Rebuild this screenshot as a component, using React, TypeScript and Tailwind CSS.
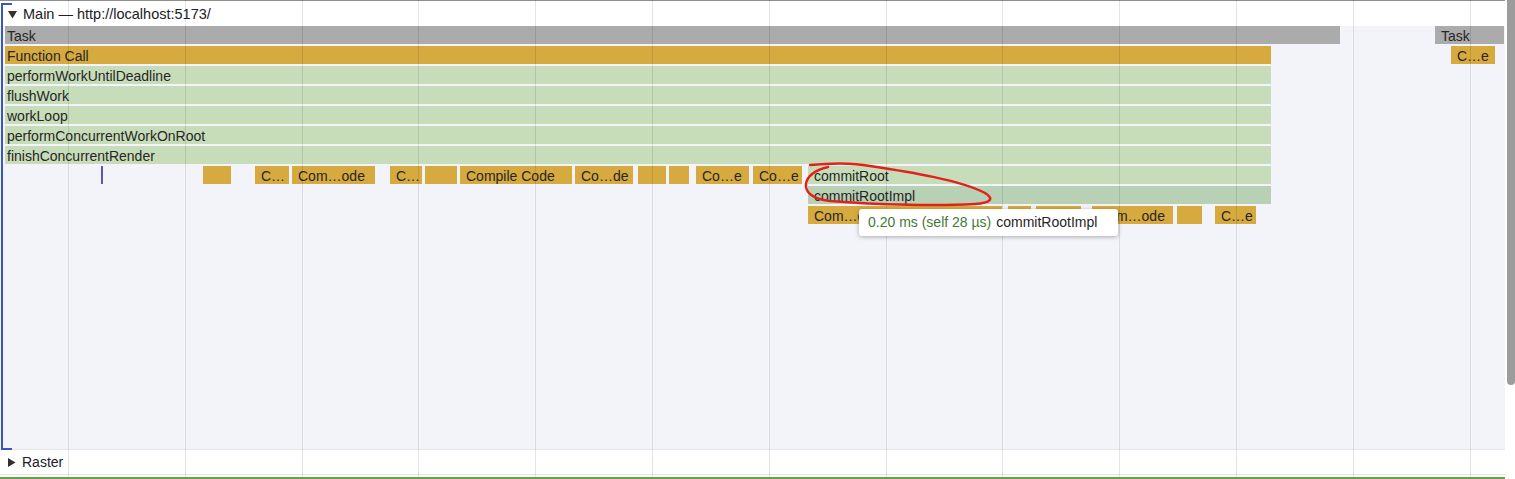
import React from "react";

type Bar = { x: number; w: number; label?: string; color: string; pad?: number };

const GRAY = "#ababab";
const GOLD = "#d7aa3f";
const GREEN = "#c7ddb9";
const SELECTED = "#b8d0b4";

const full = (label: string, color = GREEN): Bar => ({ x: 5, w: 1266, label, color, pad: 2 });

const ROWS: Bar[][] = [
  [
    { x: 5, w: 1335, label: "Task", color: GRAY, pad: 2 },
    { x: 1435, w: 69, label: "Task", color: GRAY },
  ],
  [full("Function Call", GOLD), { x: 1451, w: 44, label: "C…e", color: GOLD }],
  [full("performWorkUntilDeadline")],
  [full("flushWork")],
  [full("workLoop")],
  [full("performConcurrentWorkOnRoot")],
  [full("finishConcurrentRender")],
  [
    { x: 101, w: 2, color: "#6553b0", pad: 0 },
    { x: 203, w: 28, color: GOLD },
    { x: 255, w: 34, label: "C…", color: GOLD },
    { x: 292, w: 83, label: "Com…ode", color: GOLD },
    { x: 390, w: 32, label: "C…", color: GOLD },
    { x: 425, w: 32, color: GOLD },
    { x: 460, w: 112, label: "Compile Code", color: GOLD },
    { x: 575, w: 58, label: "Co…de", color: GOLD },
    { x: 638, w: 28, color: GOLD },
    { x: 669, w: 20, color: GOLD },
    { x: 696, w: 53, label: "Co…e", color: GOLD },
    { x: 753, w: 49, label: "Co…e", color: GOLD },
    { x: 808, w: 463, label: "commitRoot", color: GREEN },
  ],
  [{ x: 808, w: 463, label: "commitRootImpl", color: SELECTED }],
  [
    { x: 808, w: 194, label: "Com…ode", color: GOLD },
    { x: 1008, w: 23, color: GOLD },
    { x: 1036, w: 45, color: GOLD },
    { x: 1092, w: 81, label: "Com…ode", color: GOLD },
    { x: 1177, w: 25, color: GOLD },
    { x: 1215, w: 41, label: "C…e", color: GOLD },
  ],
];

const GRID = Array.from({ length: 13 }, (_, i) => Math.round(68 + i * 116.8));

function FlameRow({ bars }: { bars: Bar[] }) {
  return (
    <div className="relative h-[18px] shrink-0">
      {bars.map((b, i) => (
        <div
          key={i}
          className="absolute top-0 h-[18px] overflow-hidden whitespace-nowrap pt-px text-[14px] leading-[18px] text-[#262626]"
          style={{ left: b.x, width: b.w, background: b.color, paddingLeft: b.pad ?? 6 }}
        >
          {b.label}
        </div>
      ))}
    </div>
  );
}

export default function App() {
  return (
    <div className="relative flex h-[479px] w-[1515px] overflow-hidden bg-white font-['Liberation_Sans',Arial,sans-serif]">
      <div className="flex w-[1505px] flex-col">
        <div className="flex h-[26px] shrink-0 items-center gap-[6px] border-t border-[#8e8e8e] pl-[8px] pt-[3px] text-[14.5px] text-[#202124]">
          <svg width="9" height="8" viewBox="0 0 9 8">
            <polygon points="0,0 9,0 4.5,7.5" fill="#303030" />
          </svg>
          <span>Main — http://localhost:5173/</span>
        </div>
        <div className="flex h-[424px] shrink-0 flex-col gap-[2px] border-b border-[#e6e7eb] bg-[#f3f4f9]">
          {ROWS.map((bars, i) => (
            <FlameRow key={i} bars={bars} />
          ))}
        </div>
        <div className="flex h-[24px] shrink-0 items-center gap-[6px] pl-[8px] pt-px text-[14px] text-[#202124]">
          <svg width="8" height="9" viewBox="0 0 8 9">
            <polygon points="0,0 7.5,4.5 0,9" fill="#303030" />
          </svg>
          <span>Raster</span>
        </div>
        <div className="h-px shrink-0 bg-[#e3e3e3]" />
        <div className="h-[2px] shrink-0" />
        <div className="h-[2px] shrink-0 bg-[#67a04f]" />
      </div>
      <div className="w-[10px] pl-[2px]">
        <div className="h-[385px] w-[8px] rounded-b-[4px] bg-[#9c9c9c]" />
      </div>

      {/* timeline grid */}
      <div className="pointer-events-none absolute left-0 top-0 h-[477px] w-[1505px]">
        {GRID.map((x) => (
          <div key={x} className="absolute top-0 h-full w-px bg-black/10" style={{ left: x }} />
        ))}
      </div>

      {/* group bracket */}
      <div className="pointer-events-none absolute left-[1px] top-[3px] h-[447px] w-[11px] border-y-2 border-l-2 border-[#3a56c0]" />

      {/* tooltip */}
      <div className="absolute left-[859px] top-[209px] flex h-[27px] w-[259px] items-center rounded-[3px] bg-white pl-[9px] text-[14px] shadow-[0_1px_4px_rgba(0,0,0,0.3)]">
        <span className="text-[#3f7a34]">0.20 ms (self 28 µs)</span>
        <span className="ml-[5px] text-[#262626]">commitRootImpl</span>
      </div>

      {/* hand-drawn annotation */}
      <svg className="pointer-events-none absolute left-0 top-0" width="1515" height="479">
        <path
          d="M 810 165 C 830 163, 850 162, 870 166 C 910 172, 960 180, 985 193 C 995 199, 990 203, 975 204 C 940 206, 880 205, 830 201 C 812 199, 805 192, 806 184 C 807 177, 812 171, 828 167"
          fill="none"
          stroke="#e3211b"
          strokeWidth="2.5"
          strokeLinecap="round"
        />
      </svg>
    </div>
  );
}
